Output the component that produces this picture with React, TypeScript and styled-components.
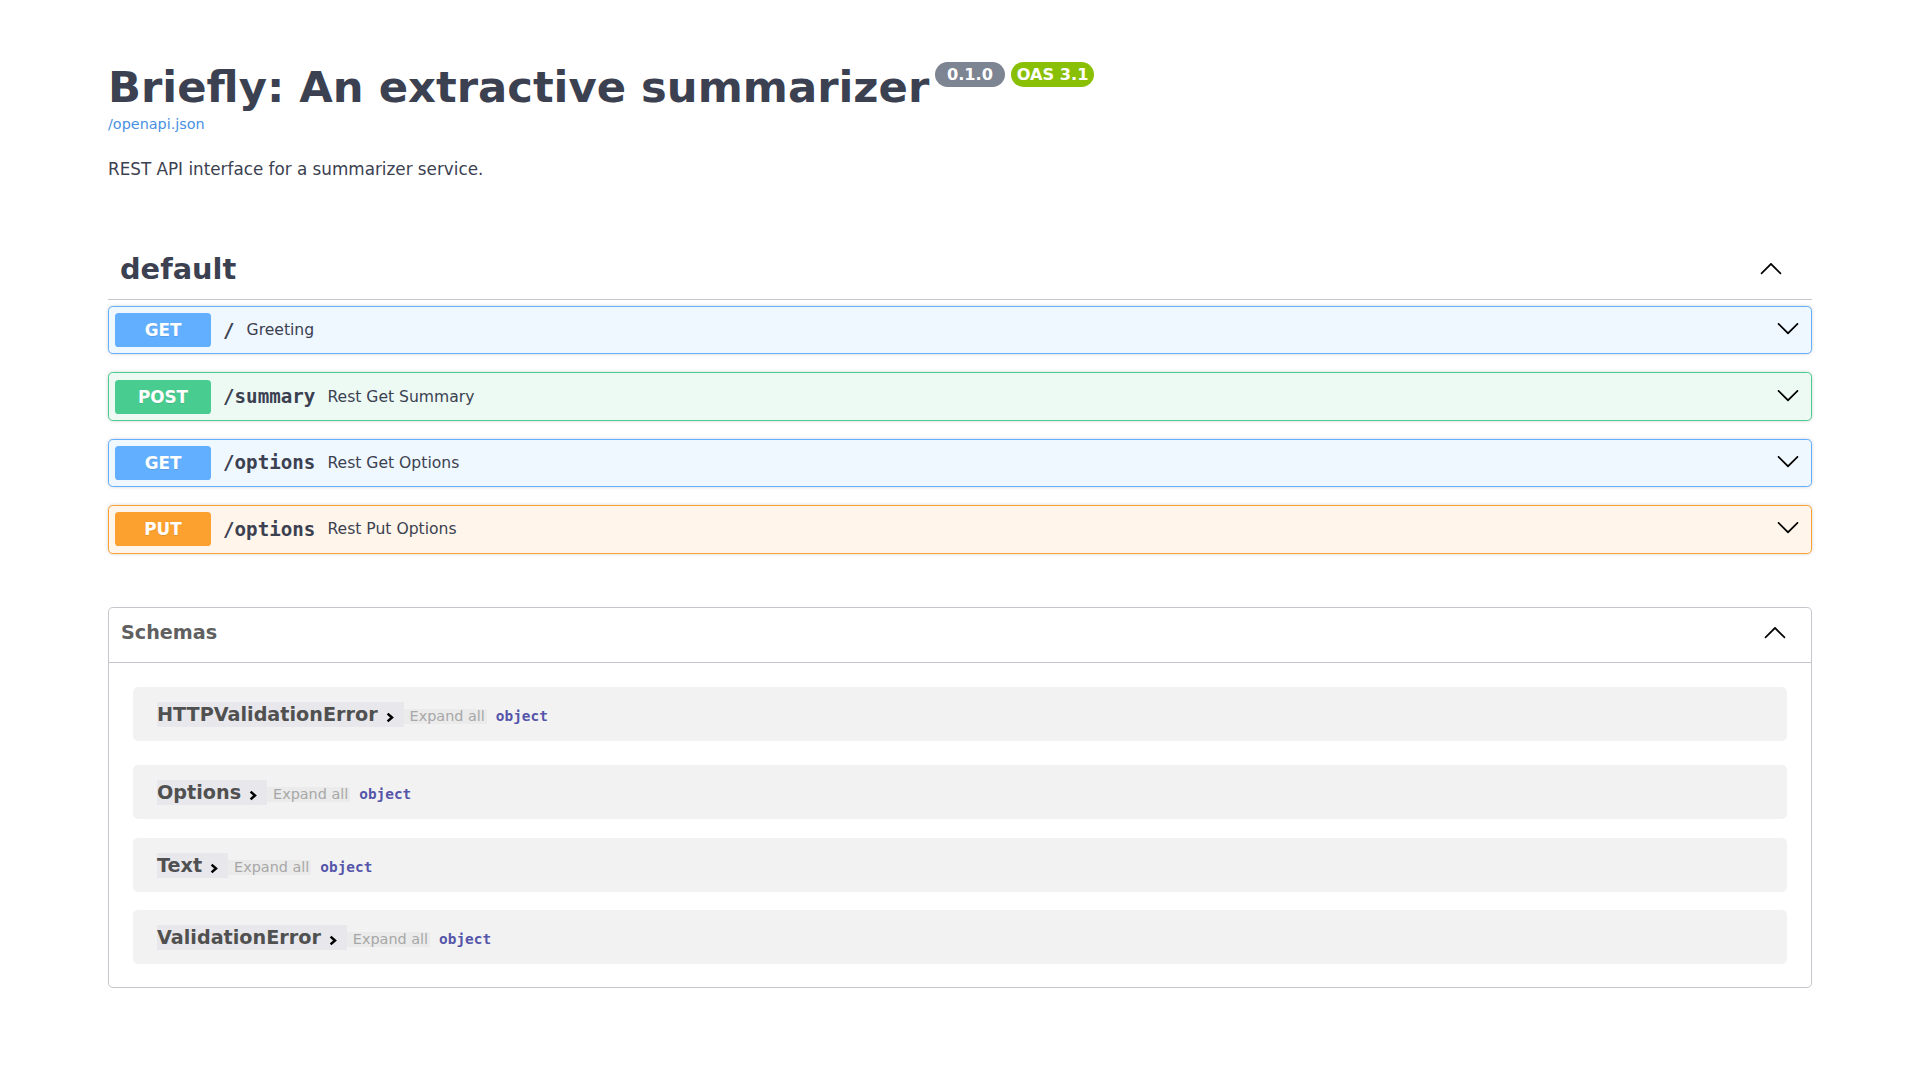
import React from "react";
import styled, { createGlobalStyle } from "styled-components";

const GlobalStyle = createGlobalStyle`
  html, body { margin: 0; padding: 0; background: #ffffff; }
  body { font-family: "DejaVu Sans", "Liberation Sans", sans-serif; color: #3b4151; }
  * { box-sizing: border-box; }
`;

const Page = styled.div`
  max-width: 1704px;
  margin: 0 auto;
  padding: 62px 0 80px;
`;

const TitleRow = styled.div`
  display: flex;
  align-items: flex-start;
`;

const Title = styled.h2`
  margin: 0;
  font-family: "DejaVu Sans", sans-serif;
  font-weight: 700;
  font-size: 43.3px;
  line-height: normal;
  color: #3b4151;
`;

const Badge = styled.span<{ $bg: string }>`
  margin-left: 6px;
  height: 25px;
  line-height: 25px;
  padding: 0 6px;
  border-radius: 57px;
  background: ${(p) => p.$bg};
  color: #ffffff;
  font-family: "DejaVu Sans", sans-serif;
  font-weight: 700;
  font-size: 16.2px;
  white-space: pre;
`;

const SpecLink = styled.a`
  display: block;
  margin-top: 4px;
  font-size: 14.4px;
  line-height: normal;
  color: #4990e2;
  text-decoration: none;
  width: max-content;
`;

const Description = styled.p`
  margin: 27px 0 0;
  font-size: 16.8px;
  line-height: normal;
  color: #3b4151;
`;

const TagHeader = styled.div`
  display: flex;
  align-items: center;
  margin-top: 62px;
  margin-bottom: 6px;
  padding: 11px 24px 13px 12px;
  border-bottom: 1px solid #c4c6cb;
`;

const TagTitle = styled.h3`
  flex: 1;
  margin: 0;
  font-size: 28.8px;
  font-weight: 700;
  line-height: normal;
  color: #3b4151;
`;

const ToggleButton = styled.span<{ $pad?: string; $shift?: number }>`
  display: flex;
  padding: ${(p) => p.$pad || "0"};
  margin-bottom: ${(p) => p.$shift || 0}px;
  color: #000;
`;

const OpList = styled.div`
  display: flex;
  flex-direction: column;
  gap: 18px;
`;

const OpRow = styled.div<{ $border: string; $bg: string }>`
  display: flex;
  align-items: center;
  height: 48.4px;
  padding: 6px;
  border: 1px solid ${(p) => p.$border};
  background: ${(p) => p.$bg};
  border-radius: 4.8px;
  box-shadow: 0 0 3.6px rgba(0, 0, 0, 0.19);
`;

const Method = styled.span<{ $bg: string }>`
  flex: none;
  width: 96px;
  height: 34px;
  line-height: 34px;
  text-align: center;
  border-radius: 3.6px;
  background: ${(p) => p.$bg};
  color: #ffffff;
  font-size: 16.8px;
  font-weight: 700;
  text-shadow: 0 1px 0 rgba(0, 0, 0, 0.1);
`;

const OpPath = styled.span`
  padding: 0 12px;
  font-family: "DejaVu Sans Mono", "Liberation Mono", monospace;
  font-weight: 700;
  font-size: 19.2px;
  color: #3b4151;
`;

const OpDesc = styled.span`
  flex: 1;
  font-size: 15.6px;
  color: #3b4151;
`;

const Models = styled.section`
  margin-top: 53px;
  border: 1px solid #c4c6cb;
  border-radius: 4.8px;
`;

const ModelsHeader = styled.h4`
  display: flex;
  align-items: center;
  height: 54px;
  box-sizing: content-box;
  margin: 0;
  padding: 0 24px 0 12px;
  border-bottom: 1px solid #c4c6cb;
  font-size: 19.2px;
  font-weight: 700;
  color: #606060;
`;

const ModelsTitle = styled.span`
  flex: 1;
  margin-bottom: 4px;
`;

const ModelList = styled.div`
  display: flex;
  flex-direction: column;
  padding: 0 24px 23px;
`;

const ModelContainer = styled.div<{ $gap: number }>`
  display: flex;
  align-items: center;
  height: 54px;
  margin-top: ${(p) => p.$gap}px;
  padding: 2px 0 0 24px;
  background: rgba(0, 0, 0, 0.05);
  border-radius: 4.8px;
`;

const ModelHead = styled.div`
  display: flex;
  align-items: baseline;
`;

const NameBox = styled.span`
  display: inline-flex;
  align-items: center;
  line-height: 25px;
  padding-right: 10px;
  background: #e8e8ec;
  font-size: 19.2px;
  font-weight: 700;
  color: #505050;
`;

const ModelChevron = styled.svg`
  margin-left: 8px;
  margin-top: 5px;
  flex: none;
`;

const ExpandAll = styled.span`
  line-height: 15px;
  padding: 0 2px 0 6px;
  background: #ebebeb;
  font-size: 14.4px;
  color: #a7a7a7;
`;

const TypeLabel = styled.span`
  margin-left: 9px;
  font-family: "DejaVu Sans Mono", "Liberation Mono", monospace;
  font-weight: 700;
  font-size: 14.4px;
  color: #55a;
`;

const ArrowDown = () => (
  <svg width="24" height="24" viewBox="0 0 20 20" fill="#000">
    <path d="M17.418 6.109c.272-.268.709-.268.979 0s.271.701 0 .969l-7.908 7.83c-.27.268-.707.268-.979 0l-7.908-7.83c-.27-.268-.27-.701 0-.969.271-.268.709-.268.979 0L10 13.25l7.418-7.141z" />
  </svg>
);

const ArrowUp = () => (
  <svg width="24" height="24" viewBox="0 0 20 20" fill="#000">
    <path d="M17.418 14.908c.272.268.709.268.979 0s.271-.701 0-.969l-7.908-7.83c-.27-.268-.707-.268-.979 0l-7.908 7.83c-.27.268-.27.701 0 .969.271.268.709.268.979 0L10 7.767l7.418 7.141z" />
  </svg>
);

type Op = { method: string; path: string; desc: string };

const METHOD_STYLE: Record<string, { color: string; bg: string }> = {
  GET: { color: "#61affe", bg: "#eff7ff" },
  POST: { color: "#49cc90", bg: "#edfaf4" },
  PUT: { color: "#fca130", bg: "#fff5ea" },
};

const ops: Op[] = [
  { method: "GET", path: "/", desc: "Greeting" },
  { method: "POST", path: "/summary", desc: "Rest Get Summary" },
  { method: "GET", path: "/options", desc: "Rest Get Options" },
  { method: "PUT", path: "/options", desc: "Rest Put Options" },
];

const models = [
  { name: "HTTPValidationError", gap: 24 },
  { name: "Options", gap: 24 },
  { name: "Text", gap: 19 },
  { name: "ValidationError", gap: 18 },
];

export default function App() {
  return (
    <>
      <GlobalStyle />
      <Page>
        <TitleRow>
          <Title>Briefly: An extractive summarizer</Title>
          <Badge $bg="#7d8492">{" 0.1.0 "}</Badge>
          <Badge $bg="#89bf04">OAS 3.1</Badge>
        </TitleRow>
        <SpecLink href="#">/openapi.json</SpecLink>
        <Description>REST API interface for a summarizer service.</Description>

        <TagHeader>
          <TagTitle>default</TagTitle>
          <ToggleButton $pad="0 5px" $shift={2}>
            <ArrowUp />
          </ToggleButton>
        </TagHeader>

        <OpList>
          {ops.map((op, i) => {
            const s = METHOD_STYLE[op.method];
            return (
              <OpRow key={i} $border={s.color} $bg={s.bg}>
                <Method $bg={s.color}>{op.method}</Method>
                <OpPath>{op.path}</OpPath>
                <OpDesc>{op.desc}</OpDesc>
                <ToggleButton $pad="0 5px 0 0" $shift={4}>
                  <ArrowDown />
                </ToggleButton>
              </OpRow>
            );
          })}
        </OpList>

        <Models>
          <ModelsHeader>
            <ModelsTitle>Schemas</ModelsTitle>
            <ToggleButton $shift={6}>
              <ArrowUp />
            </ToggleButton>
          </ModelsHeader>
          <ModelList>
            {models.map((m) => (
              <ModelContainer key={m.name} $gap={m.gap}>
                <ModelHead>
                  <NameBox>
                    {m.name}
                    <ModelChevron width="8" height="11" viewBox="0 0 8 11">
                      <path
                        d="M1.6 1.6 L6 5.5 L1.6 9.4"
                        stroke="#000"
                        strokeWidth="2.5"
                        fill="none"
                      />
                    </ModelChevron>
                  </NameBox>
                  <ExpandAll>Expand all</ExpandAll>
                  <TypeLabel>object</TypeLabel>
                </ModelHead>
              </ModelContainer>
            ))}
          </ModelList>
        </Models>
      </Page>
    </>
  );
}
